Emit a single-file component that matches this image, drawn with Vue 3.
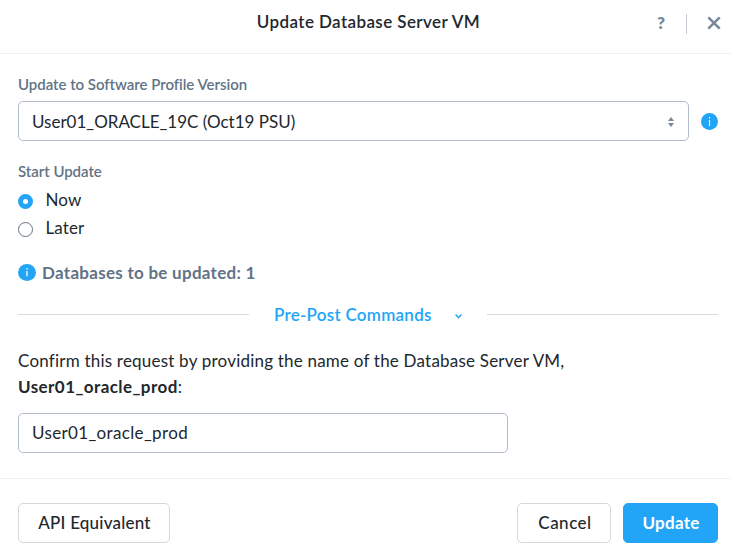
<script setup>
import { ref } from 'vue'
const schedule = ref('now')
const confirmation = ref('User01_oracle_prod')
</script>

<template>
  <main class="dialog">
    <header class="header">
      <h1 class="title"><span class="t-title">Update Database Server VM</span></h1>
      <div class="tools">
        <button class="tool help" aria-label="Help">?</button>
        <i class="divider"></i>
        <button class="tool close" aria-label="Close">
          <svg width="14" height="14" viewBox="0 0 14 14"><path d="M1.3 1.3 12.7 12.7M12.7 1.3 1.3 12.7" fill="none" stroke="#78899c" stroke-width="2.6" /></svg>
        </button>
      </div>
    </header>

    <section class="body">
      <div class="label"><span class="t-profile">Update to Software Profile Version</span></div>
      <div class="select-row">
        <div class="select">
          <span class="t-select">User01_ORACLE_19C (Oct19 PSU)</span>
          <svg width="6" height="10" viewBox="0 0 6 10"><path d="M0 4 3 0 6 4ZM0 6 3 10 6 6Z" fill="#78899c" /></svg>
        </div>
        <svg class="info" width="17" height="17" viewBox="0 0 17 17"><circle cx="8.5" cy="8.5" r="8.5" fill="#22a5f7" /><path d="M8.5 7v6M8.5 4v1.6" stroke="#fff" stroke-width="1.1" /></svg>
      </div>

      <div class="label start"><span class="t-start">Start Update</span></div>
      <label class="radio">
        <input v-model="schedule" type="radio" value="now" /><span class="t-now">Now</span>
      </label>
      <label class="radio">
        <input v-model="schedule" type="radio" value="later" /><span class="t-later">Later</span>
      </label>

      <div class="count">
        <svg width="18" height="17" viewBox="0 0 18 17"><ellipse cx="9" cy="8.5" rx="9" ry="8.5" fill="#22a5f7" /><path d="M9 7v5.3M9 4v1.6" stroke="#fff" stroke-width="1.3" /></svg>
        <span class="t-count">Databases to be updated: 1</span>
      </div>

      <div class="commands">
        <i class="rule"></i>
        <span class="t-commands">Pre-Post Commands</span>
        <svg width="7" height="5" viewBox="0 0 7 5"><path d="M.6.6 3.5 3.7 6.4.6" fill="none" stroke="#22a5f7" stroke-width="1.5" /></svg>
        <i class="rule"></i>
      </div>

      <p class="confirm">
        <span class="t-confirm">Confirm this request by providing the name of the Database Server VM,</span><br />
        <b class="t-name">User01_oracle_prod</b>:
      </p>
      <input v-model="confirmation" class="field" type="text" />
    </section>

    <footer class="footer">
      <button class="btn api"><span class="t-api">API Equivalent</span></button>
      <button class="btn cancel"><span class="t-cancel">Cancel</span></button>
      <button class="btn primary"><span class="t-update">Update</span></button>
    </footer>
  </main>
</template>

<style>
body { margin: 0; background: #fff; }
</style>

<style scoped>
* { box-sizing: border-box; }
.dialog {
  width: 731px; height: 558px; overflow: hidden;
  display: flex; flex-direction: column;
  font-family: Lato, "Open Sans", sans-serif; font-size: 17px; color: #22272e; background: #fff;
}
span, b { white-space: nowrap; }
.header {
  height: 54px; flex: none; display: grid; grid-template-columns: 1fr auto 1fr;
  padding: 0 10px 0 16px; border-bottom: 1px solid #f0f1f3;
}
.title { grid-column: 2; margin: 0; font-size: 17px; line-height: 44px; font-weight: 600; letter-spacing: .4px; }
.tools { display: flex; align-items: center; justify-content: flex-end; height: 46px; }
.tool { border: 0; padding: 0; background: none; font: 800 17px/20px Lato, sans-serif; color: #78899c; display: flex; }
.divider { width: 1px; height: 20px; background: #c5ccd6; margin: 2px 20px 0 21px; }
.body { padding: 0 13px 0 18px; height: 424px; flex: none; }
.label { font-size: 15px; font-weight: 600; color: #627386; line-height: 20px; padding-top: 20px; }
.t-profile { letter-spacing: -.03px; }
.t-start { letter-spacing: -.04px; }
.select-row { display: flex; align-items: center; gap: 12px; margin-top: 7px; }
.select {
  width: 671px; height: 40px; border: 1px solid #b2bccb; border-radius: 5px;
  display: flex; align-items: center; justify-content: space-between; padding: 1px 14px 0 13px;
}
.label.start { padding-top: 20px; margin-bottom: 5px; }
.radio { display: flex; align-items: center; height: 28px; }
.radio span { margin-top: -2px; letter-spacing: .1px; }
.radio input {
  appearance: none; width: 15px; height: 15px; margin: 3px 12.5px 0 0;
  border: 1px solid #627386; border-radius: 50%;
}
.radio input:checked { border: 5px solid #22a5f7; }
.count { display: flex; align-items: center; gap: 6px; margin-top: 20px; height: 20px; font-weight: 700; color: #627386; letter-spacing: .28px; }
.commands { display: flex; align-items: center; margin-top: 22px; height: 20px; font-weight: 600; color: #22a5f7; }
.rule { height: 1px; background: #d8dade; width: 231px; }
.commands .t-commands { width: 157px; margin-left: 25px; letter-spacing: .26px; }
.commands svg { margin: 4px 25px 0 24px; }
.confirm { margin: 24px 0 0; line-height: 26px; }
.t-confirm { letter-spacing: .21px; }
.t-name { letter-spacing: .43px; }
.field {
  display: block; width: 490px; height: 40px; margin: 13px 0 0; padding: 0 13px 1px;
  border: 1px solid #b2bccb; border-radius: 5px; font: 400 17px Lato, sans-serif; color: #22272e; letter-spacing: .35px;
}
.footer { display: flex; flex: none; height: 80px; padding: 24px 13px 0 18px; border-top: 1px solid #f0f1f3; }
.btn {
  height: 40px; padding: 0 0 1px; border: 1px solid #d3d8df; border-radius: 5px; background: #fff;
  font: 500 17px Lato, sans-serif; color: #22272e;
}
.api { width: 152px; margin-right: auto; padding-left: 1px; letter-spacing: .22px; }
.cancel { width: 94px; margin-right: 12px; padding-left: 2px; letter-spacing: .5px; }
.primary { width: 95px; border-color: #22a5f7; background: #22a5f7; color: #fff; font-weight: 700; padding-left: 1px; letter-spacing: .25px; }
</style>
